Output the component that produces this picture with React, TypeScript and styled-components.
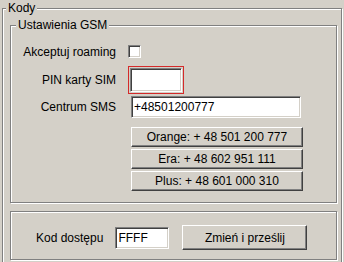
import React from "react";
import styled, { createGlobalStyle } from "styled-components";

const GlobalStyle = createGlobalStyle`
  html, body {
    margin: 0;
    padding: 0;
    overflow: hidden;
    background: #d4d0c8;
  }
  body {
    font-family: "Liberation Sans", Arial, sans-serif;
    font-size: 12px;
    color: #000;
  }
`;

const Window = styled.div`
  width: 344px;
  height: 262px;
  box-sizing: border-box;
  padding: 8px 0 0 2px;
`;

// etched frame, like the old win32 group box
const GroupBox = styled.div<{ $w?: number; $h?: number; $pad: string; $mt?: number }>`
  position: relative;
  box-sizing: border-box;
  width: ${(p) => (p.$w ? `${p.$w}px` : "auto")};
  height: ${(p) => (p.$h ? `${p.$h}px` : "auto")};
  margin-top: ${(p) => p.$mt || 0}px;
  padding: ${(p) => p.$pad};
  border: 1px solid #808080;
  box-shadow: inset 1px 1px 0 #fff, 1px 1px 0 #fff;
`;

const Caption = styled.span<{ $left: number }>`
  position: absolute;
  top: -8px;
  left: ${(p) => p.$left}px;
  padding: 0 2px;
  line-height: 14px;
  background: #d4d0c8;
`;

const FormRow = styled.div<{ $top: number; $h: number }>`
  display: flex;
  align-items: center;
  margin-top: ${(p) => p.$top}px;
  height: ${(p) => p.$h}px;
`;

const Label = styled.label`
  flex: none;
  width: 105px;
  margin-right: 12px;
  text-align: right;
  white-space: nowrap;
`;

const Check = styled.input`
  appearance: none;
  box-sizing: border-box;
  width: 13px;
  height: 13px;
  margin: 0;
  background: #fff;
  border: 1px solid;
  border-color: #808080 #fff #fff #808080;
  box-shadow: inset 1px 1px 0 #404040, inset -1px -1px 0 #d4d0c8;
`;

const RedFrame = styled.span`
  display: flex;
  box-sizing: border-box;
  padding: 1px;
  border: 1px solid #d42a2a;
`;

const Field = styled.input<{ $w: number; $h: number; $ml?: number }>`
  box-sizing: border-box;
  width: ${(p) => p.$w}px;
  height: ${(p) => p.$h}px;
  margin: 0 0 0 ${(p) => p.$ml || 0}px;
  padding: 0 2px;
  font: inherit;
  color: #000;
  background: #fff;
  border: 1px solid;
  border-color: #808080 #fff #fff #808080;
  box-shadow: inset 1px 1px 0 #404040, inset -1px -1px 0 #d4d0c8;
  outline: none;
`;

const ButtonStack = styled.div`
  display: flex;
  flex-direction: column;
  gap: 2px;
  margin: 9px 0 0 120px;
`;

const Button = styled.button<{ $w: number; $h: number; $ml?: number }>`
  box-sizing: border-box;
  width: ${(p) => p.$w}px;
  height: ${(p) => p.$h}px;
  margin: 0 0 0 ${(p) => p.$ml || 0}px;
  padding: 0;
  font: inherit;
  color: #000;
  background: #d4d0c8;
  border: 1px solid;
  border-color: #fff #404040 #404040 #fff;
  box-shadow: inset -1px -1px 0 #808080;
`;

const AccessRow = styled.div`
  display: flex;
  align-items: center;
  height: 100%;
  padding-top: 4px;
  box-sizing: border-box;
`;

const AccessLabel = styled.label`
  margin: 0 12px 0 25px;
  white-space: nowrap;
`;

const operators = [
  "Orange: + 48 501 200 777",
  "Era: + 48 602 951 111",
  "Plus: + 48 601 000 310",
];

export default function App() {
  return (
    <>
      <GlobalStyle />
      <Window>
        <GroupBox $w={340} $pad="16px 4px 3px 7px">
          <Caption $left={3}>Kody</Caption>
          <GroupBox $h={178} $pad="0">
            <Caption $left={5}>Ustawienia GSM</Caption>
            <FormRow $top={19} $h={13}>
              <Label>Akceptuj roaming</Label>
              <Check type="checkbox" />
            </FormRow>
            <FormRow $top={8} $h={28}>
              <Label>PIN karty SIM</Label>
              <RedFrame>
                <Field $w={52} $h={24} />
              </RedFrame>
            </FormRow>
            <FormRow $top={2} $h={22}>
              <Label>Centrum SMS</Label>
              <Field $w={170} $h={22} $ml={3} defaultValue="+48501200777" />
            </FormRow>
            <ButtonStack>
              {operators.map((op) => (
                <Button key={op} $w={172} $h={20}>
                  {op}
                </Button>
              ))}
            </ButtonStack>
          </GroupBox>
          <GroupBox $h={49} $pad="0" $mt={8}>
            <AccessRow>
              <AccessLabel>Kod dostępu</AccessLabel>
              <Field $w={54} $h={22} defaultValue="FFFF" />
              <Button $w={125} $h={25} $ml={13}>
                Zmień i prześlij
              </Button>
            </AccessRow>
          </GroupBox>
        </GroupBox>
      </Window>
    </>
  );
}
